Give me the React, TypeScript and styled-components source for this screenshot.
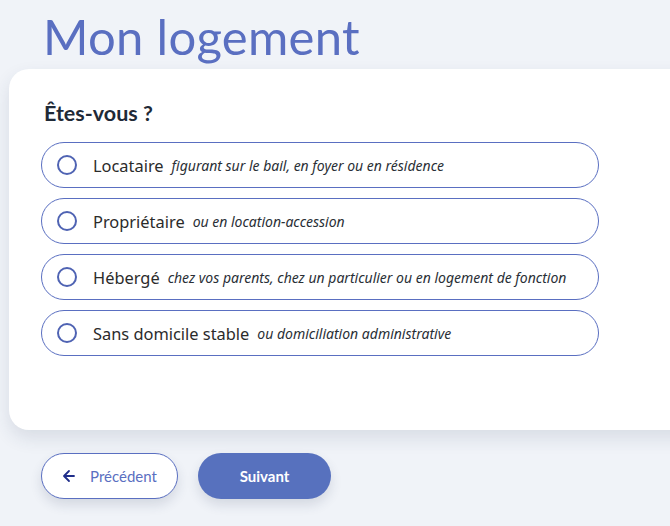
import React from 'react'
import styled, { createGlobalStyle } from 'styled-components'

const GlobalStyle = createGlobalStyle`
  html, body {
    margin: 0;
    padding: 0;
    background: #f0f3f8;
    font-family: Lato, "Noto Sans", sans-serif;
    overflow: hidden;
  }
`

const Page = styled.div`
  width: 670px;
  height: 526px;
  overflow: hidden;
  background: #f0f3f8;
`

const Title = styled.h1`
  margin: 0;
  padding: 8px 0 0 43px;
  height: 69px;
  box-sizing: border-box;
  font-size: 49px;
  font-weight: 400;
  line-height: 56px;
  color: #5a6fc1;
  letter-spacing: 0.3px;
`

const Card = styled.div`
  margin-left: 9px;
  width: 700px;
  height: 361px;
  box-sizing: border-box;
  background: #ffffff;
  border-radius: 20px;
  box-shadow: 0 8px 18px rgba(40, 55, 90, 0.12);
  padding: 32px 0 0 32px;
`

const Question = styled.h2`
  margin: 0 0 17px 3px;
  font-size: 21.5px;
  font-weight: 700;
  line-height: 24px;
  color: #1f2a37;
`

const Options = styled.div`
  display: flex;
  flex-direction: column;
  gap: 10px;
`

const Option = styled.label`
  display: flex;
  align-items: center;
  width: 558px;
  height: 46px;
  box-sizing: border-box;
  border: 1px solid #5a6fc1;
  border-radius: 23px;
  padding-left: 15px;
  cursor: pointer;
`

const Radio = styled.span`
  width: 16px;
  height: 16px;
  border: 2px solid #4f63b3;
  border-radius: 50%;
  flex: none;
  margin-right: 16px;
`

const Label = styled.span`
  font-family: "Noto Sans", sans-serif;
  font-size: 16.4px;
  color: #2b2b2b;
  margin-right: 8px;
`

const Hint = styled.span`
  font-family: "Noto Sans", sans-serif;
  font-size: 14px;
  font-style: italic;
  color: #2a2f36;
`

const Actions = styled.div`
  display: flex;
  gap: 20px;
  padding: 23px 0 0 41px;
`

const Button = styled.button<{ $primary?: boolean }>`
  display: flex;
  align-items: center;
  justify-content: center;
  gap: 14px;
  height: 46px;
  padding: 0;
  box-sizing: border-box;
  border-radius: 23px;
  font-family: Lato, "Noto Sans", sans-serif;
  font-size: 15px;
  font-weight: ${p => (p.$primary ? 700 : 400)};
  width: ${p => (p.$primary ? '133px' : '137px')};
  color: ${p => (p.$primary ? '#ffffff' : '#5a6fc1')};
  background: ${p => (p.$primary ? '#5771be' : '#ffffff')};
  border: ${p => (p.$primary ? 'none' : '1px solid #5a6fc1')};
  box-shadow: 0 6px 12px rgba(40, 55, 90, 0.14);
  cursor: pointer;
`

const ArrowLeft = () => (
  <svg width="14" height="14" viewBox="0 0 14 14" fill="none">
    <path d="M12 7H2.5M7 2L2 7l5 5" stroke="#1f2d8a" strokeWidth="1.8" strokeLinecap="round" strokeLinejoin="round" />
  </svg>
)

const choices = [
  { label: 'Locataire', hint: 'figurant sur le bail, en foyer ou en résidence' },
  { label: 'Propriétaire', hint: 'ou en location-accession' },
  { label: 'Hébergé', hint: 'chez vos parents, chez un particulier ou en logement de fonction' },
  { label: 'Sans domicile stable', hint: 'ou domiciliation administrative' },
]

export default function App() {
  return (
    <Page>
      <GlobalStyle />
      <Title>Mon logement</Title>
      <Card>
        <Question>Êtes-vous ?</Question>
        <Options>
          {choices.map(c => (
            <Option key={c.label}>
              <Radio />
              <Label>{c.label}</Label>
              <Hint>{c.hint}</Hint>
            </Option>
          ))}
        </Options>
      </Card>
      <Actions>
        <Button>
          <ArrowLeft />
          Précédent
        </Button>
        <Button $primary>Suivant</Button>
      </Actions>
    </Page>
  )
}
